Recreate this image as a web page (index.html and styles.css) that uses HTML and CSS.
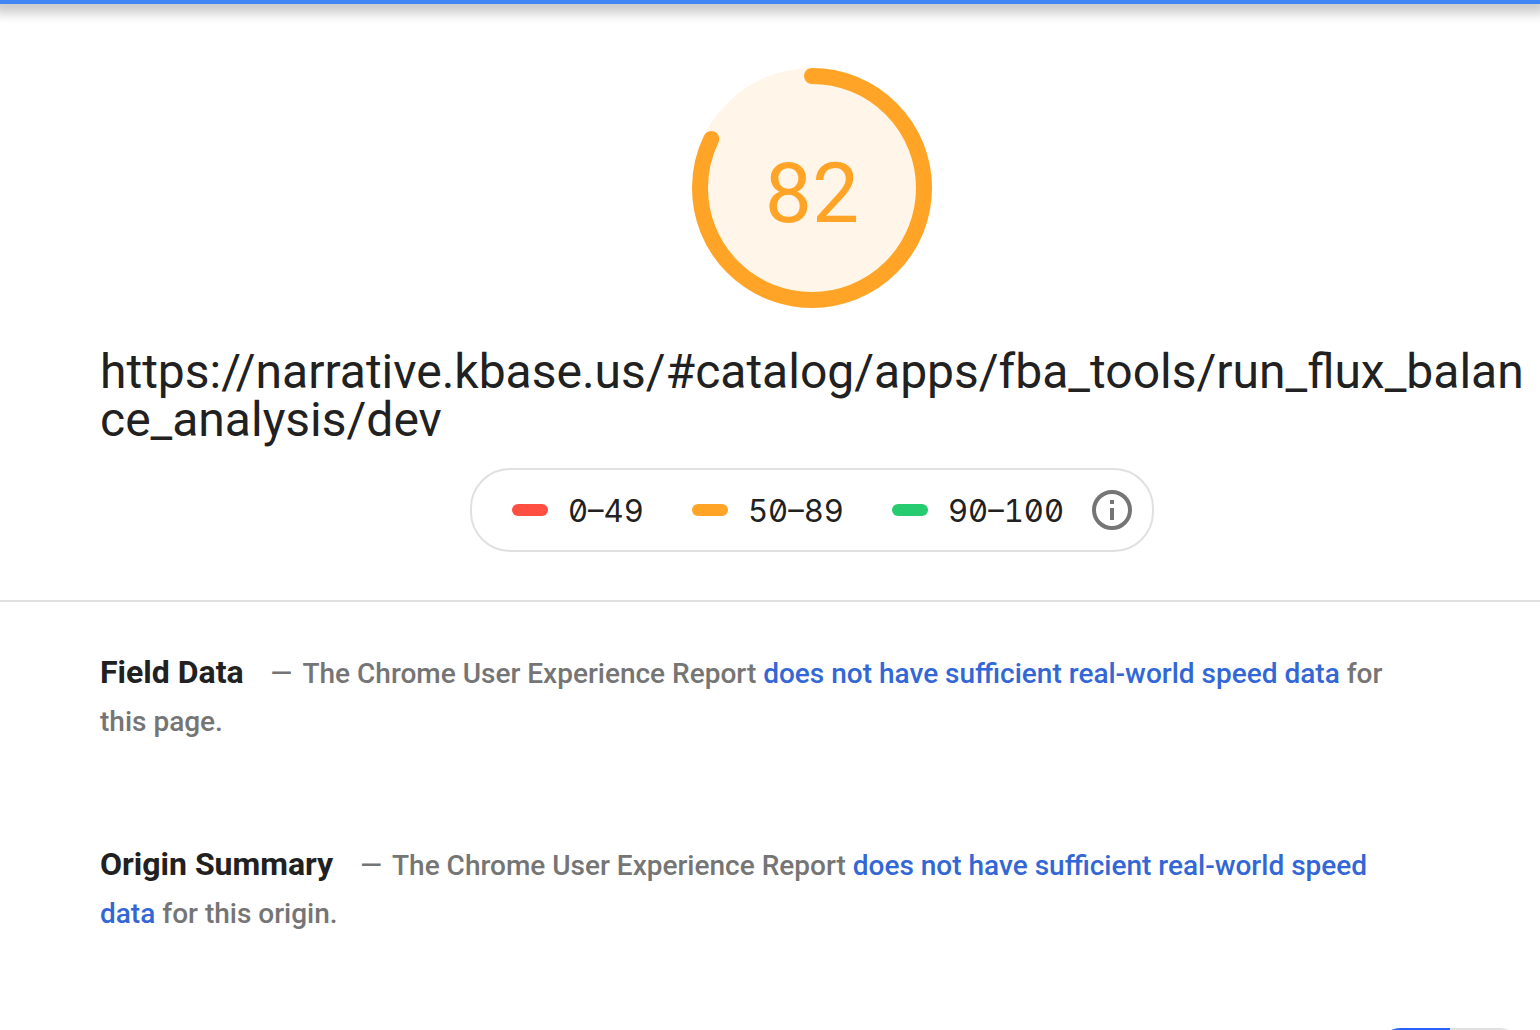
FILE: index.html
```html
<!DOCTYPE html>
<html lang="en">
<head>
<meta charset="utf-8">
<meta name="viewport" content="width=device-width, initial-scale=1">
<title>Speed report</title>
<link rel="stylesheet" href="styles.css">
</head>
<body>
<header class="topbar"></header>
<main class="report">
  <section class="summary">
    <div class="gauge">
      <svg class="gauge-ring" viewBox="0 0 240 240" aria-hidden="true">
        <circle class="gauge-base" cx="120" cy="120" r="120"/>
        <circle class="gauge-arc" cx="120" cy="120" r="112" pathLength="100" stroke-dasharray="82.2 100" transform="rotate(-90 120 120)"/>
      </svg>
      <span class="gauge-score">82</span>
    </div>
    <h1 class="page-url">https://narrative.kbase.us/#catalog/apps/fba_tools/run_flux_balance_analysis/dev</h1>
    <div class="scale">
      <span class="range range-slow">0–49</span>
      <span class="range range-average">50–89</span>
      <span class="range range-fast">90–100</span>
      <a class="info" href="#" aria-label="About the score">
        <svg viewBox="0 0 40 40" width="40" height="40" aria-hidden="true">
          <circle cx="20" cy="20" r="18" fill="none" stroke="currentColor" stroke-width="4"/>
          <path d="M18 10h4v4h-4zM18 18h4v12h-4z" fill="currentColor"/>
        </svg>
      </a>
    </div>
  </section>
  <section class="details">
    <div class="field">
      <h2 class="field-title">Field Data</h2>
      <p class="field-text"><span class="dash">—</span> The Chrome User Experience Report <a href="#">does not have sufficient real-world speed data</a> for this page.</p>
    </div>
    <div class="field">
      <h2 class="field-title">Origin Summary</h2>
      <p class="field-text"><span class="dash">—</span> The Chrome User Experience Report <a href="#">does not have sufficient real-world speed data</a> for this origin.</p>
    </div>
    <div class="view-toggle">
      <button class="view view-active" type="button" aria-label="Compact view"></button>
      <button class="view" type="button" aria-label="Expanded view"></button>
    </div>
  </section>
</main>
</body>
</html>
```
FILE: styles.css
```css
* {
  box-sizing: border-box;
}

body {
  margin: 0;
  height: 100vh;
  overflow: hidden;
  background: #fff;
  color: #212121;
  font-family: Roboto, "Liberation Sans", sans-serif;
}

.topbar {
  height: 4px;
  background: #4285f4;
  box-shadow: 0 2px 12px 7px rgba(0, 0, 0, 0.22);
}

.summary {
  display: flex;
  flex-direction: column;
  align-items: center;
  padding: 64px 16px 48px 100px;
  border-bottom: 2px solid #e0e0e0;
}

.gauge {
  display: grid;
  place-items: center;
  width: 240px;
  height: 240px;
}

.gauge-ring,
.gauge-score {
  grid-area: 1 / 1;
}

.gauge-ring {
  width: 100%;
}

.gauge-base {
  fill: #fff6e9;
}

.gauge-arc {
  fill: none;
  stroke: #ffa426;
  stroke-width: 16;
  stroke-linecap: round;
}

.gauge-score {
  padding-top: 12px;
  color: #ffa426;
  font-size: 84px;
  line-height: 96px;
}

.page-url {
  align-self: stretch;
  margin: 40px 0 24px;
  font-size: 48px;
  font-weight: 400;
  line-height: 48px;
  word-break: break-all;
}

.scale {
  display: flex;
  align-items: center;
  height: 84px;
  padding: 0 20px 0 40px;
  border: 2px solid #e0e0e0;
  border-radius: 40px;
}

.range {
  display: flex;
  align-items: center;
  gap: 20px;
  margin-right: 48px;
  font-family: Inter, "Liberation Sans", sans-serif;
  font-size: 31px;
  font-feature-settings: "tnum", "zero";
}

.range::before {
  content: "";
  width: 36px;
  height: 12px;
  border-radius: 6px;
}

.range-slow {
  width: 132px;
}

.range-average {
  width: 152px;
}

.range-fast {
  width: 172px;
  margin-right: 28px;
}

.range-slow::before {
  background: #ff4e42;
}

.range-average::before {
  background: #ffa426;
}

.range-fast::before {
  background: #26cc6f;
}

.info {
  display: flex;
  color: #757575;
}

.details {
  padding: 48px 140px 0 100px;
}

.field {
  margin-bottom: 96px;
  font-size: 28px;
  line-height: 48px;
}

.field-title,
.field-text {
  display: inline;
}

.field-title {
  margin-right: 20px;
  font-size: 32px;
  font-weight: 700;
  line-height: 40px;
}

.field-text {
  color: #757575;
  font-weight: 500;
}

.dash {
  margin-right: 4px;
}

.field-text a {
  color: #3367d6;
  text-decoration: none;
}

.view-toggle {
  display: flex;
  width: 140px;
  height: 56px;
  margin: -6px -120px 0 auto;
  overflow: hidden;
  border-radius: 20px;
}

.view {
  flex: 1;
  border: 0;
  background: #e0e0e0;
}

.view-active {
  background: #2962ff;
}
```
